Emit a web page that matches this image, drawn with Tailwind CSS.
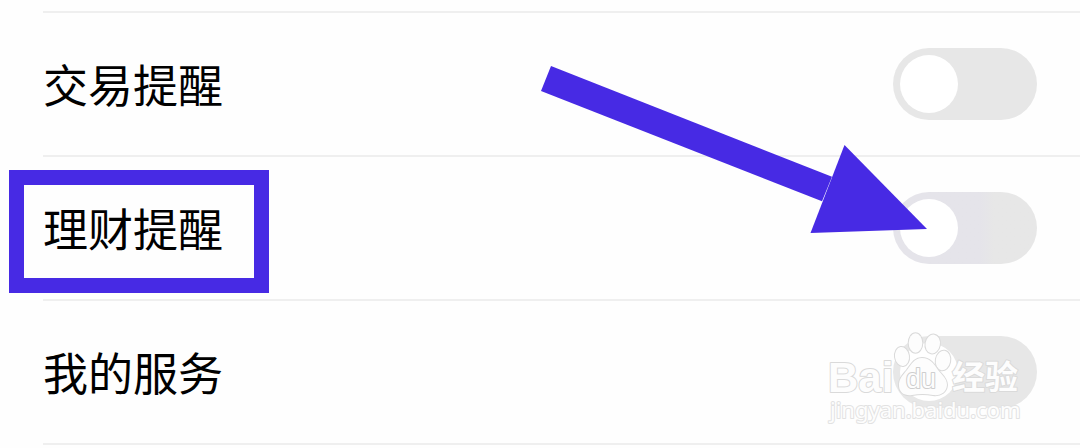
<!DOCTYPE html>
<html lang="zh-CN">
<head>
<meta charset="utf-8">
<meta name="viewport" content="width=device-width, initial-scale=1">
<title>消息提醒</title>
<script src="https://cdn.jsdelivr.net/npm/@tailwindcss/browser@4"></script>
</head>
<body class="overflow-x-hidden bg-[#fefefe] font-['Noto_Sans_CJK_SC',sans-serif] text-black">
<main class="pt-[11px] pl-[43px]">
  <ul class="border-t-2 border-[#efefef]">
    <li class="relative flex h-36 items-center justify-between border-b-2 border-[#efefef] pr-[43px]">
      <label for="trade" class="pb-0.5 text-[45px] leading-none">交易提醒</label>
      <input id="trade" type="checkbox" role="switch" class="h-[72px] w-36 appearance-none rounded-full bg-[#e7e7e7] p-[7px] before:block before:size-[58px] before:rounded-full before:bg-white before:content-[''] checked:bg-green-500 checked:before:ml-auto">
    </li>
    <li class="relative flex h-36 items-center justify-between border-b-2 border-[#efefef] pr-[43px]">
      <label for="finance" class="pb-0.5 text-[45px] leading-none">理财提醒</label>
      <span class="pointer-events-none absolute top-[13px] -left-[34px] h-[123px] w-[260px] border-[15px] border-[#472ae4]"></span>
      <input id="finance" type="checkbox" role="switch" class="h-[72px] w-36 appearance-none rounded-full bg-linear-to-r from-[#e5e4ea] from-60% to-[#e7e7e7] to-70% p-[7px] before:block before:size-[58px] before:rounded-full before:bg-white before:content-[''] checked:bg-green-500 checked:bg-none checked:before:ml-auto">
      <svg class="pointer-events-none absolute -top-[91px] right-[153px]" width="386" height="167" viewBox="541 66 386 167" fill="#472ae4" aria-hidden="true">
        <path d="M551 66 832 176.800 822 201.300 541 91Z"/>
        <path d="M844.500 145 927 229 810.500 233Z"/>
      </svg>
    </li>
    <li class="relative flex h-36 items-center justify-between border-b-2 border-[#efefef] pr-[43px]">
      <label for="service" class="pb-0.5 text-[45px] leading-none">我的服务</label>
      <input id="service" type="checkbox" role="switch" class="h-[72px] w-36 appearance-none rounded-full bg-[#e7e7e7] p-[7px] before:block before:size-[58px] before:rounded-full before:bg-white before:content-[''] checked:bg-green-500 checked:before:ml-auto">
      <svg class="pointer-events-none absolute top-[27px] right-[52px]" width="203" height="102" viewBox="825 328 203 102" fill="#fdfdfd" stroke="#dadada" stroke-width="2" paint-order="stroke" stroke-linejoin="round" role="img" aria-label="Baidu 经验">
        <text x="828" y="392" font-family="Liberation Sans" font-weight="700" font-size="42">Bai</text>
        <g>
          <ellipse cx="902" cy="356.500" rx="7" ry="9.500" transform="rotate(-8 902 356.500)"/>
          <ellipse cx="915.500" cy="343" rx="6.800" ry="9.700"/>
          <ellipse cx="932.700" cy="344" rx="7.200" ry="9.500" transform="rotate(10 932.700 344)"/>
          <ellipse cx="943" cy="360.500" rx="7.200" ry="9.800" transform="rotate(10 943 360.500)"/>
          <path d="M922 358C914 358 911 365 907 370C903 375 898.500 379 899 386C899.500 393 905 396 912 395C919 393.500 926 393.500 933 395C941 396 946.500 392 947 385C947 378 941 374 938 370C934 364 930 358 922 358Z"/>
        </g>
        <text x="906" y="388" font-family="Liberation Sans" font-size="27" stroke="#cecece">du</text>
        <text x="952" y="389" font-family="Noto Sans CJK SC" font-weight="700" font-size="33">经验</text>
        <text x="830" y="418" font-family="Noto Sans" font-size="22" stroke="#e2e2e2">jingyan.baidu.com</text>
      </svg>
    </li>
  </ul>
</main>
</body>
</html>
